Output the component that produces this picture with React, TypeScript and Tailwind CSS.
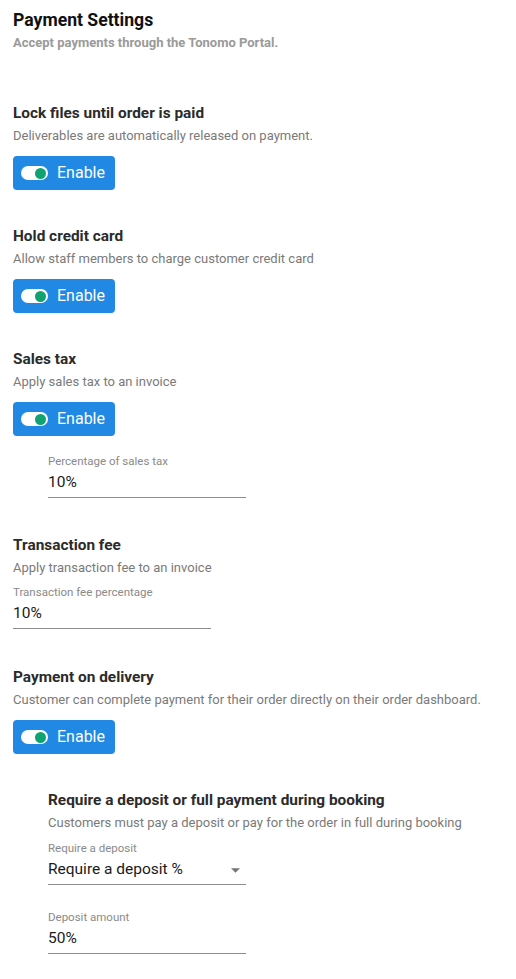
import React from 'react';

function EnableButton() {
  return (
    <button className="flex h-[34px] w-[102px] items-center rounded-[4px] bg-[#2189e4] pl-[8px] text-[16px] text-white">
      <span className="relative mr-[9px] h-[14px] w-[27px] rounded-full bg-white">
        <span className="absolute right-[2px] top-[1.5px] h-[11px] w-[11px] rounded-full bg-[#10a270]" />
      </span>
      Enable
    </button>
  );
}

function Field({ label, value, select }: { label: string; value: string; select?: boolean }) {
  return (
    <div className="w-[198px]">
      <div className="text-[11.5px] leading-[16px] text-[#8a8a8a]">{label}</div>
      <div className="flex h-[29px] items-center justify-between border-b border-[#8c8c8c] text-[15.5px] text-[#1a1a1a]">
        <span>{value}</span>
        {select && (
          <svg width="9" height="5" viewBox="0 0 10 5" className="mr-[6px]">
            <path d="M0 0 L10 0 L5 5 Z" fill="#757575" />
          </svg>
        )}
      </div>
    </div>
  );
}

function Heading({ title, desc }: { title: string; desc: string }) {
  return (
    <div>
      <div className="text-[15.4px] font-bold leading-[20px] text-[#2b2b2b]">{title}</div>
      <div className="mt-[3px] text-[13px] leading-[20px] text-[#7a7a7a]">{desc}</div>
    </div>
  );
}

export default function App() {
  return (
    <div className="min-h-screen bg-white px-[13px] pt-[8px] font-['Roboto',sans-serif]">
      <h1 className="text-[17.6px] font-bold leading-[24px] text-[#111]">Payment Settings</h1>
      <p className="mt-[2px] text-[13px] font-bold leading-[17px] text-[#9a9a9a]">
        Accept payments through the Tonomo Portal.
      </p>

      <div className="mt-[52px]">
        <Heading title="Lock files until order is paid" desc="Deliverables are automatically released on payment." />
        <div className="mt-[10px]">
          <EnableButton />
        </div>
      </div>

      <div className="mt-[36px]">
        <Heading title="Hold credit card" desc="Allow staff members to charge customer credit card" />
        <div className="mt-[10px]">
          <EnableButton />
        </div>
      </div>

      <div className="mt-[36px]">
        <Heading title="Sales tax" desc="Apply sales tax to an invoice" />
        <div className="mt-[10px]">
          <EnableButton />
        </div>
        <div className="mt-[17px] pl-[35px]">
          <Field label="Percentage of sales tax" value="10%" />
        </div>
      </div>

      <div className="mt-[37px]">
        <Heading title="Transaction fee" desc="Apply transaction fee to an invoice" />
        <div className="mt-[6px]">
          <Field label="Transaction fee percentage" value="10%" />
        </div>
      </div>

      <div className="mt-[38px]">
        <Heading
          title="Payment on delivery"
          desc="Customer can complete payment for their order directly on their order dashboard."
        />
        <div className="mt-[10px]">
          <EnableButton />
        </div>
      </div>

      <div className="mt-[36px] pl-[35px]">
        <Heading
          title="Require a deposit or full payment during booking"
          desc="Customers must pay a deposit or pay for the order in full during booking"
        />
        <div className="mt-[7px]">
          <Field label="Require a deposit" value="Require a deposit %" select />
        </div>
        <div className="mt-[24px]">
          <Field label="Deposit amount" value="50%" />
        </div>
      </div>
    </div>
  );
}
